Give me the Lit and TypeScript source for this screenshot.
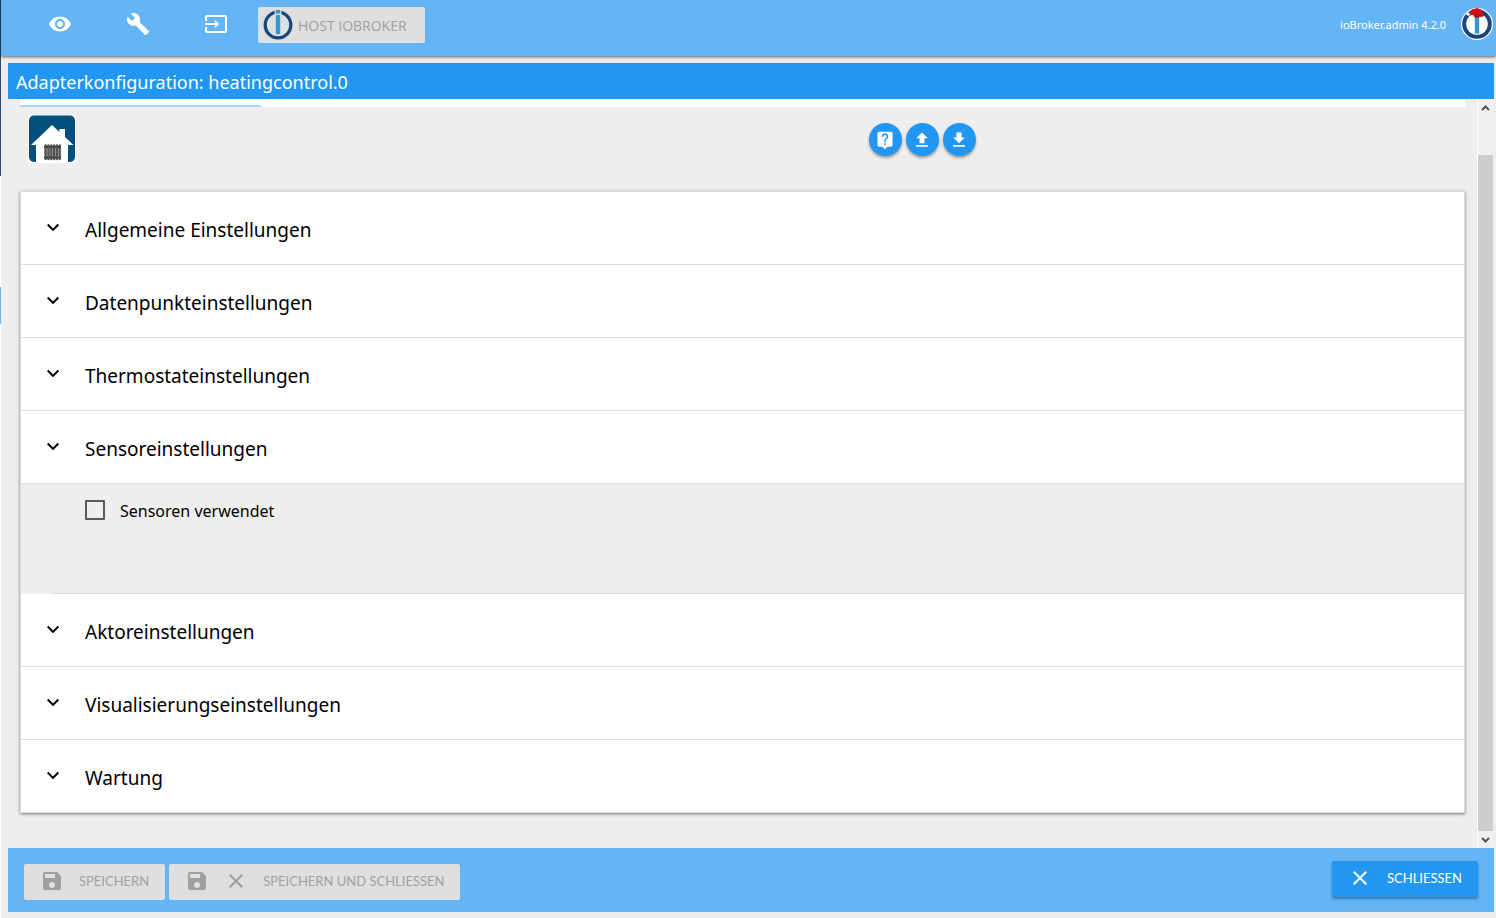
import { LitElement, html, css, svg, nothing } from "lit";
import { customElement, property, state } from "lit/decorators.js";

const ICONS = {
  eye: "M12 4.5C7 4.5 2.73 7.61 1 12c1.73 4.39 6 7.5 11 7.5s9.27-3.11 11-7.5c-1.73-4.39-6-7.5-11-7.5zM12 17c-2.76 0-5-2.24-5-5s2.24-5 5-5 5 2.24 5 5-2.24 5-5 5zm0-8c-1.66 0-3 1.34-3 3s1.34 3 3 3 3-1.34 3-3-1.34-3-3-3z",
  build: "M22.7 19l-9.1-9.1c.9-2.3.4-5-1.5-6.9-2-2-5-2.4-7.4-1.3L9 6 6 9 1.6 4.7C.4 7.1.9 10.1 2.9 12.1c1.9 1.9 4.6 2.4 6.9 1.5l9.1 9.1c.4.4 1 .4 1.4 0l2.3-2.3c.5-.4.5-1.1.1-1.4z",
  input: "M21 3.01H3c-1.1 0-2 .9-2 2V9h2V4.99h18v14.03H3V15H1v4.01c0 1.1.9 1.98 2 1.98h18c1.1 0 2-.88 2-1.98v-14c0-1.11-.9-2-2-2zM11 16l4-4-4-4v3H1v2h10v3z",
  help: "M19 2H5c-1.11 0-2 .9-2 2v14c0 1.1.89 2 2 2h4l3 3 3-3h4c1.1 0 2-.9 2-2V4c0-1.1-.9-2-2-2zm-6 16h-2v-2h2v2zm2.07-7.75l-.9.92C13.45 11.9 13 12.5 13 14h-2v-.5c0-1.1.45-2.1 1.17-2.83l1.24-1.26c.37-.36.59-.86.59-1.41 0-1.1-.9-2-2-2s-2 .9-2 2H8c0-2.21 1.79-4 4-4s4 1.79 4 4c0 .88-.36 1.68-.93 2.25z",
  upload: "M9 16h6v-6h4l-7-7-7 7h4zm-4 2h14v2H5z",
  download: "M19 9h-4V3H9v6H5l7 7 7-7zM5 18v2h14v-2H5z",
  down: "M7.41 7.84L12 12.42l4.59-4.58L18 9.25l-6 6-6-6z",
  save: "M17 3H5c-1.11 0-2 .9-2 2v14c0 1.1.89 2 2 2h14c1.1 0 2-.9 2-2V7l-4-4zm-5 16c-1.66 0-3-1.34-3-3s1.34-3 3-3 3 1.34 3 3-1.34 3-3 3zm3-10H5V5h10v4z",
  close: "M19 6.41L17.59 5 12 10.59 6.41 5 5 6.41 10.59 12 5 17.59 6.41 19 12 13.41 17.59 19 19 17.59 13.41 12z",
};

@customElement("mat-icon")
class MatIcon extends LitElement {
  @property() name: keyof typeof ICONS = "eye";
  @property({ type: Number }) size = 24;

  static styles = css`
    :host { display: block; flex: none; }
    svg { display: block; fill: currentColor; }
  `;

  render() {
    return html`<svg width=${this.size} height=${this.size} viewBox="0 0 24 24" aria-hidden="true">
      ${svg`<path d=${ICONS[this.name]}></path>`}
    </svg>`;
  }
}

@customElement("broker-logo")
class BrokerLogo extends LitElement {
  @property({ type: Boolean }) festive = false;

  static styles = css`
    :host { display: block; flex: none; }
    svg { display: block; }
  `;

  render() {
    return html`<svg width="32" height="32" viewBox="0 0 32 32" aria-hidden="true">
      ${this.festive
        ? svg`<circle cx="16" cy="16" r="16" fill="#fff"></circle>
            <circle cx="16" cy="16" r="12.8" fill="none" stroke="#1d4477" stroke-width="4"></circle>
            <rect x="13.8" y="9" width="4.4" height="16.6" fill="#3399cc"></rect>
            <path d="M7 5.500L11 1.500 16 0l4 1.500L23 8l-9 2-1-2.500z" fill="#d40f14"></path>
            <path d="M13 6l9 .500 1 1.500-9 2z" fill="#b50c11"></path>
            <circle cx="7.200" cy="6.200" r="1.600" fill="#fff"></circle>`
        : svg`<circle cx="16" cy="16" r="12.8" fill="none" stroke="#17457d" stroke-width="3.300"></circle>
            <rect x="12.600" y="0" width="6.800" height="6" fill="#dfdfdf"></rect>
            <rect x="13.800" y="1" width="4.400" height="3.600" fill="#3399cc"></rect>
            <rect x="13.800" y="6" width="4.400" height="19.200" fill="#3399cc"></rect>`}
    </svg>`;
  }
}

@customElement("app-root")
class AppRoot extends LitElement {
  @state() private open = "Sensoreinstellungen";

  private sections = [
    "Allgemeine Einstellungen",
    "Datenpunkteinstellungen",
    "Thermostateinstellungen",
    "Sensoreinstellungen",
    "Aktoreinstellungen",
    "Visualisierungseinstellungen",
    "Wartung",
  ];

  static styles = css`
    :host {
      display: grid;
      grid-template-columns: 1px minmax(0, 1fr);
      height: 100vh;
      background: #eee;
      color: #000;
      font-family: "Noto Sans", "Open Sans", sans-serif;
      font-size: 16px;
    }
    * { box-sizing: border-box; }
    button { font: inherit; color: inherit; border: 0; margin: 0; cursor: pointer; }

    .edge {
      background: linear-gradient(#2b4a70 0 176px, #fff 176px 287px, #64b5f6 287px 324px, #fff 324px);
    }
    .page { display: flex; flex-direction: column; min-height: 0; }

    .topbar {
      display: flex;
      align-items: flex-start;
      height: 56px;
      flex: none;
      padding: 0 3px 0 20px;
      background: #64b5f6;
      color: #fff;
      box-shadow: 0 1px 3px rgba(0, 0, 0, 0.6);
    }
    .nav { display: flex; }
    .nav a { color: #fff; padding: 12px 27px; }
    .host {
      display: flex;
      align-items: center;
      gap: 4px;
      height: 36px;
      margin: 7px 0 0 3px;
      padding: 0 18px 0 4px;
      border-radius: 2px;
      background: #dfdfdf;
      color: #9f9f9f;
      font-family: "Open Sans", sans-serif;
      font-size: 14px;
    }
    .account {
      display: flex;
      align-items: center;
      gap: 15px;
      margin: 8px 0 0 auto;
      font-size: 11px;
    }

    .dialog {
      display: flex;
      flex-direction: column;
      flex: 1;
      min-height: 0;
      margin: 7px 2px 6px 7px;
    }
    .title {
      flex: none;
      margin: 0;
      padding: 2px 8px 0;
      background: #2196f3;
      color: #fff;
      font-size: 18px;
      font-weight: 400;
      line-height: 34px;
    }
    .body { display: flex; flex: 1; min-height: 0; }
    .content { flex: 1; min-width: 0; padding: 0 12px; overflow: hidden; }
    .tabs { display: flex; align-items: flex-end; height: 8px; background: #fff; }
    .indicator { width: 241px; height: 2px; background: #a6d6fa; }
    .tools {
      display: grid;
      grid-template-columns: 7fr 5fr;
      align-items: start;
      padding: 8px 0 27px;
    }
    .logo { display: block; margin-left: 8px; }
    .rounds { display: flex; gap: 4px; padding: 8px 6px; }
    .round {
      display: grid;
      place-items: center;
      width: 33px;
      height: 33px;
      padding: 0;
      border-radius: 50%;
      background: #2196f3;
      color: #fff;
      box-shadow: 0 2px 3px rgba(0, 0, 0, 0.35);
    }

    .sections {
      list-style: none;
      margin: 0;
      padding: 0;
      border: 1px solid #ddd;
      border-bottom: 0;
      background: #fff;
      box-shadow: 0 1px 3px rgba(0, 0, 0, 0.5);
    }
    .heading {
      display: flex;
      align-items: center;
      gap: 20px;
      width: 100%;
      height: 73px;
      padding: 4px 20px 0;
      border-bottom: 1px solid #ddd;
      background: #fff;
      text-align: left;
      font-size: 19px;
    }
    .heading mat-icon { padding-bottom: 5px; }
    .panel { height: 110px; padding-left: 32px; background: #eee; }
    .inner { height: 100%; padding: 14px 32px; border-bottom: 1px solid #ddd; }
    .check { display: inline-flex; align-items: center; gap: 15px; line-height: 26px; }
    .check input {
      appearance: none;
      width: 20px;
      height: 20px;
      margin: 0 0 2px;
      border: 2px solid #5a5a5a;
      border-radius: 1px;
    }
    .check input:checked { background: #2196f3; border-color: #2196f3; }

    .scroll {
      display: flex;
      flex-direction: column;
      flex: none;
      width: 17px;
      border-left: 1px solid #fff;
      background: #f0f0f0;
    }
    .scroll svg { flex: none; display: block; }
    .thumb { flex: 1; width: 15px; margin-top: 39px; background: #cdcdcd; }

    .actions {
      display: flex;
      align-items: flex-end;
      gap: 4px;
      flex: none;
      height: 64px;
      padding: 13px 16px 12px;
      background: #64b5f6;
    }
    .action {
      display: flex;
      align-items: center;
      gap: 15px;
      height: 36px;
      padding: 0 16px 2px;
      border-radius: 2px;
      background: #dfdfdf;
      color: #9f9f9f;
      font-family: Lato, sans-serif;
      font-size: 13px;
    }
    .primary {
      align-self: flex-start;
      margin-left: auto;
      background: #2196f3;
      color: #fff;
      box-shadow: 0 2px 3px rgba(0, 0, 0, 0.35);
    }
  `;

  private toggle(name: string) {
    this.open = this.open === name ? "" : name;
  }

  private adapterLogo() {
    const fins = [0, 1, 2, 3, 4, 5];
    return html`<svg class="logo" width="48" height="48" viewBox="0 0 48 48" role="img" aria-label="heatingcontrol">
      ${svg`<rect width="48" height="48" fill="#fff"></rect>
        <rect x="1" y="0.500" width="46" height="46.500" rx="5" fill="#004f7c"></rect>
        <path d="M3 30L24 10l7.500 7V14H37v8l8.500 8H40v18H8V30z" fill="#fff"></path>
        <path d="M16 32h17M16 42.500h17" stroke="#111" stroke-width="1.600"></path>
        ${fins.map((i) => svg`<rect x=${16.6 + i * 2.8} y="29.500" width="2.100" height="15.500" rx="1" fill="#555" stroke="#222" stroke-width="0.300"></rect>`)}`}
    </svg>`;
  }

  render() {
    return html`
      <div class="edge"></div>
      <div class="page">
        <header class="topbar">
          <nav class="nav">
            <a href="#view" aria-label="Ansicht"><mat-icon name="eye"></mat-icon></a>
            <a href="#settings" aria-label="Einstellungen"><mat-icon name="build"></mat-icon></a>
            <a href="#login" aria-label="Anmelden"><mat-icon name="input"></mat-icon></a>
          </nav>
          <button class="host"><broker-logo></broker-logo>HOST IOBROKER</button>
          <div class="account"><span>ioBroker.admin 4.2.0</span><broker-logo festive></broker-logo></div>
        </header>
        <main class="dialog">
          <h1 class="title">Adapterkonfiguration: heatingcontrol.0</h1>
          <div class="body">
            <div class="content">
              <div class="tabs"><div class="indicator"></div></div>
              <div class="tools">
                ${this.adapterLogo()}
                <div class="rounds">
                  <button class="round" aria-label="Hilfe"><mat-icon name="help" size="20"></mat-icon></button>
                  <button class="round" aria-label="Hochladen"><mat-icon name="upload" size="20"></mat-icon></button>
                  <button class="round" aria-label="Herunterladen"><mat-icon name="download" size="20"></mat-icon></button>
                </div>
              </div>
              <ul class="sections">
                ${this.sections.map(
                  (name) => html`<li>
                    <button class="heading" aria-expanded=${this.open === name} @click=${() => this.toggle(name)}>
                      <mat-icon name="down"></mat-icon>${name}
                    </button>
                    ${this.open === name
                      ? html`<div class="panel"><div class="inner">
                          <label class="check"><input type="checkbox" />Sensoren verwendet</label>
                        </div></div>`
                      : nothing}
                  </li>`
                )}
              </ul>
            </div>
            <div class="scroll" aria-hidden="true">
              <svg width="15" height="17" viewBox="0 0 15 17"><path d="M4 11l3.500-3.500L11 11" fill="none" stroke="#555" stroke-width="2"></path></svg>
              <div class="thumb"></div>
              <svg width="15" height="17" viewBox="0 0 15 17"><path d="M4 7l3.500 3.500L11 7" fill="none" stroke="#555" stroke-width="2"></path></svg>
            </div>
          </div>
          <footer class="actions">
            <button class="action"><mat-icon name="save"></mat-icon>SPEICHERN</button>
            <button class="action"><mat-icon name="save"></mat-icon><mat-icon name="close"></mat-icon>SPEICHERN UND SCHLIESSEN</button>
            <button class="action primary"><mat-icon name="close"></mat-icon>SCHLIESSEN</button>
          </footer>
        </main>
      </div>
    `;
  }
}
